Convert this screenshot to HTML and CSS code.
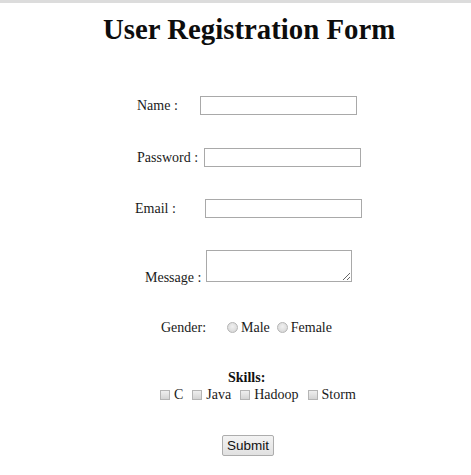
FILE: index.html
```html
<!DOCTYPE html>
<html>
<head>
<meta charset="utf-8">
<link rel="stylesheet" href="styles.css">
</head>
<body>
<div class="page">
  <h1 class="title">User Registration Form</h1>
  <form class="form">
    <div class="row row-name"><span class="label">Name :</span><input class="field" type="text"></div>
    <div class="row row-pass"><span class="label">Password :</span><input class="field" type="password"></div>
    <div class="row row-email"><span class="label">Email :</span><input class="field" type="text"></div>
    <div class="row row-msg"><span class="label">Message :</span><textarea class="area"></textarea></div>
    <div class="row row-gender"><span class="label">Gender:</span>
      <span class="opt"><span class="radio"></span>Male</span>
      <span class="opt"><span class="radio"></span>Female</span>
    </div>
    <div class="skills-title">Skills:</div>
    <div class="row row-skills">
      <span class="opt"><span class="check"></span>C</span>
      <span class="opt"><span class="check"></span>Java</span>
      <span class="opt"><span class="check"></span>Hadoop</span>
      <span class="opt"><span class="check"></span>Storm</span>
    </div>
    <div class="row row-submit"><button class="submit" type="button">Submit</button></div>
  </form>
</div>
</body>
</html>
```

FILE: styles.css
```css
html, body {
  margin: 0;
  padding: 0;
  background: #fff;
}
body {
  font-family: "Liberation Serif", "Times New Roman", serif;
  font-size: 14px;
  color: #1a1a1a;
}
.page {
  border-top: 3px solid #dcdcdc;
  width: 471px;
  height: 472px;
}
.title {
  margin: 11px 0 0 103px;
  font-size: 28.8px;
  line-height: 30px;
  font-weight: bold;
  color: #0d0d0d;
  white-space: nowrap;
}
.form {
  display: flex;
  flex-direction: column;
  margin-top: 52px;
}
.row {
  display: flex;
  align-items: center;
  height: 19px;
}
.field {
  box-sizing: border-box;
  height: 19px;
  width: 157px;
  border: 1px solid #a9a9a9;
  padding: 0;
  margin: 0;
  background: #fff;
}
.label { white-space: nowrap; }
.row-name { padding-left: 137px; }
.row-name .label { width: 63px; }
.row-pass { padding-left: 137px; margin-top: 33px; }
.row-pass .label { width: 67px; }
.row-email { padding-left: 135px; margin-top: 32px; }
.row-email .label { width: 70px; }
.row-msg {
  padding-left: 145px;
  margin-top: 32px;
  height: 32px;
  align-items: flex-end;
}
.row-msg .label { width: 61px; line-height: 14px; margin-bottom: -3px; }
.area {
  box-sizing: border-box;
  width: 146px;
  height: 32px;
  border: 1px solid #a9a9a9;
  margin: 0;
  padding: 0;
  resize: both;
}
.row-gender { padding-left: 161px; margin-top: 36px; }
.row-gender .label { width: 66px; }
.opt {
  display: inline-flex;
  align-items: center;
  white-space: nowrap;
}
.row-gender .opt { margin-right: 7px; }
.radio {
  display: inline-block;
  box-sizing: border-box;
  width: 11px;
  height: 11px;
  border-radius: 50%;
  border: 1px solid #b5b5b5;
  background: radial-gradient(circle at 50% 40%, #f0f0f0, #d2d2d2);
  margin-right: 3px;
}
.skills-title {
  margin-top: 33px;
  padding-left: 228px;
  font-weight: bold;
  color: #111;
  line-height: 16px;
}
.row-skills {
  padding-left: 160px;
  margin-top: 0;
  height: 18px;
}
.row-skills .opt { margin-right: 9px; }
.check {
  display: inline-block;
  box-sizing: border-box;
  width: 10px;
  height: 10px;
  border: 1px solid #b5b5b5;
  background: linear-gradient(#efefef, #d4d4d4);
  margin-right: 4px;
}
.row-submit {
  padding-left: 222px;
  margin-top: 31px;
  height: 21px;
}
.submit {
  box-sizing: border-box;
  width: 52px;
  height: 21px;
  font-family: "Liberation Sans", Arial, sans-serif;
  font-size: 13.5px;
  color: #111;
  padding: 0;
  border: 1px solid #adadad;
  border-radius: 2px;
  background: linear-gradient(#f3f3f3, #e1e1e1);
}
```
